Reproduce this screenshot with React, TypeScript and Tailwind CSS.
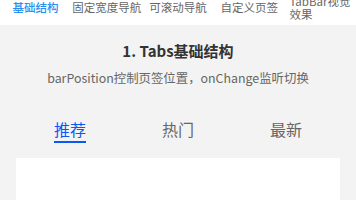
const font = { fontFamily: '"Noto Sans CJK SC", "Noto Sans", sans-serif' };

const topTabs = ['基础结构', '固定宽度导航', '可滚动导航', '自定义页签', 'TabBar视觉效果'];
const innerTabs = ['推荐', '热门', '最新'];

export default function App() {
  return (
    <div className="w-[356px] h-[200px] overflow-hidden bg-[#f3f3f3]" style={font}>
      <div className="flex h-[25px] overflow-hidden bg-white pb-[10px]">
        {topTabs.map((t, i) => (
          <div key={t} className="flex min-w-0 flex-1 items-center justify-center">
            <span
              className={
                'text-left text-[11.5px] leading-[13px] ' +
                (i === 0 ? 'font-medium text-[#2a8ef0]' : 'text-[#666666]') +
                (i === 4 ? ' max-w-[62px]' : ' whitespace-nowrap')
              }
            >
              {t}
            </span>
          </div>
        ))}
      </div>

      <div className="mt-[16px] text-center text-[15px] leading-[20px] font-bold text-[#333333]">
        1. Tabs基础结构
      </div>
      <div className="mt-[9px] text-center text-[12.4px] leading-[16px] text-[#666666]">
        barPosition控制页签位置，onChange监听切换
      </div>

      <div className="mx-[16px] mt-[32px] flex">
        {innerTabs.map((t, i) => (
          <div key={t} className="flex flex-1 justify-center">
            <div className="flex flex-col items-center">
              <span
                className={
                  'text-[16px] leading-[22px] ' +
                  (i === 0 ? 'text-[#0a59f7]' : 'text-[#666666]')
                }
              >
                {t}
              </span>
              <div className={'mt-[1px] h-[2px] w-full ' + (i === 0 ? 'bg-[#0a59f7]' : 'bg-transparent')} />
            </div>
          </div>
        ))}
      </div>

      <div className="mx-[16px] mt-[15px] h-[60px] bg-white" />
    </div>
  );
}
